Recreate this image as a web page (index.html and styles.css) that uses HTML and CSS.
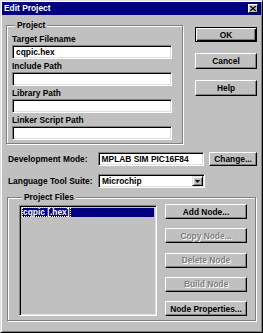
FILE: index.html
```html
<!DOCTYPE html>
<html lang="en">
<head>
  <meta charset="UTF-8" />
  <title>Edit Project</title>
  <link rel="stylesheet" href="styles.css">
</head>
<body>
  <div class="window">
    <div class="title-bar">
      <span class="title">Edit Project</span>
      <span class="close-btn">
        <svg width="6" height="5" viewBox="0 0 6 5"><path d="M0 0L6 5M6 0L0 5" stroke="#000" stroke-width="1.3"/></svg>
      </span>
    </div>

    <div class="content">
      <div class="top-section">
        <fieldset class="group project-group">
          <legend>Project</legend>
          <div class="field">
            <label>Target Filename</label>
            <div class="text-box">cqpic.hex</div>
          </div>
          <div class="field">
            <label>Include Path</label>
            <div class="text-box"></div>
          </div>
          <div class="field">
            <label>Library Path</label>
            <div class="text-box"></div>
          </div>
          <div class="field">
            <label>Linker Script Path</label>
            <div class="text-box"></div>
          </div>
        </fieldset>

        <div class="side-buttons">
          <button class="btn btn-default">OK</button>
          <button class="btn">Cancel</button>
          <button class="btn">Help</button>
        </div>
      </div>

      <div class="form-row dev-row">
        <span class="row-label">Development Mode:</span>
        <div class="text-box row-box">MPLAB SIM PIC16F84</div>
        <button class="btn change-btn">Change...</button>
      </div>

      <div class="form-row lang-row">
        <span class="row-label">Language Tool Suite:</span>
        <div class="text-box row-box combo">
          <span>Microchip</span>
          <span class="combo-arrow">
            <svg width="5" height="3" viewBox="0 0 5 3"><path d="M0 0H5L2.5 3Z" fill="#000"/></svg>
          </span>
        </div>
      </div>

      <fieldset class="group files-group">
        <legend>Project Files</legend>
        <div class="files-body">
          <div class="list-box">
            <div class="list-item selected"><span>cqpic [.hex]</span></div>
          </div>
          <div class="node-buttons">
            <button class="btn">Add Node...</button>
            <button class="btn" disabled>Copy Node...</button>
            <button class="btn" disabled>Delete Node</button>
            <button class="btn" disabled>Build Node</button>
            <button class="btn">Node Properties...</button>
          </div>
        </div>
      </fieldset>
    </div>
  </div>
</body>
</html>
```

FILE: styles.css
```css
body {
  margin: 0;
  padding: 0;
  background: #c0c0c0;
  font-family: "Liberation Sans", Arial, sans-serif;
  font-size: 8.4px;
  font-weight: bold;
  color: #000;
}

.window {
  width: 263px;
  height: 333px;
  box-sizing: border-box;
  padding: 1px;
  border: 1px solid;
  border-color: #dfdfdf #000 #000 #dfdfdf;
  box-shadow: inset 1px 1px #fff, inset -1px -1px #808080;
  background: #c0c0c0;
}

.title-bar {
  height: 13px;
  background: #000080;
  color: #fff;
  display: flex;
  align-items: center;
  justify-content: space-between;
  padding: 0 3px 0 2px;
}

.title {
  line-height: 13px;
}

.close-btn {
  width: 10px;
  height: 9px;
  box-sizing: border-box;
  background: #c0c0c0;
  border: 1px solid;
  border-color: #fff #000 #000 #fff;
  display: flex;
  align-items: center;
  justify-content: center;
}

.content {
  padding: 0 4px;
}

.top-section {
  display: flex;
  align-items: flex-start;
}

/* group boxes */
.group {
  margin: 0;
  border: 1px solid #808080;
  box-shadow: inset 1px 1px #fff, 1px 1px #fff;
  min-inline-size: 0;
}

.group legend {
  padding: 0 2px;
  margin-left: 3px;
  line-height: 10px;
  background: #c0c0c0;
}

.project-group {
  margin-top: 5px;
  width: 177px;
  box-sizing: border-box;
  padding: 4px 10px 3px 5px;
}

.field {
  margin-bottom: 2px;
}

.field:last-child {
  margin-bottom: 0;
}

.field label {
  display: block;
  line-height: 10px;
  margin-bottom: 1px;
}

.text-box {
  width: 160px;
  height: 14px;
  box-sizing: border-box;
  background: #fff;
  border: 1px solid;
  border-color: #808080 #fff #fff #808080;
  box-shadow: inset 1px 1px #000, inset -1px -1px #dfdfdf;
  padding: 0 3px;
  line-height: 12px;
  white-space: nowrap;
  overflow: hidden;
}

/* buttons */
.btn {
  font-family: inherit;
  font-size: inherit;
  font-weight: bold;
  color: #000;
  background: #c0c0c0;
  height: 15px;
  padding: 0;
  box-sizing: border-box;
  border: 1px solid;
  border-color: #fff #000 #000 #fff;
  box-shadow: inset -1px -1px #808080;
  line-height: 12px;
}

.btn:disabled {
  color: #808080;
  text-shadow: 1px 1px #fff;
}

.btn-default {
  border-color: #000;
  box-shadow: inset 1px 1px #fff, inset -1px -1px #000, inset -2px -2px #808080;
}

.side-buttons {
  margin-left: auto;
  margin-top: 12px;
  width: 62px;
  display: flex;
  flex-direction: column;
  gap: 11px;
}

.side-buttons .btn {
  width: 62px;
  height: 15px;
}

.side-buttons .btn + .btn {
  height: 16px;
}

/* single line rows */
.form-row {
  display: flex;
  align-items: center;
}

.dev-row {
  margin-top: 8px;
}

.lang-row {
  margin-top: 8px;
}

.row-label {
  width: 90px;
  padding-left: 2px;
}

.row-box {
  width: 107px;
}

.change-btn {
  width: 48px;
  height: 14px;
  margin-left: 5px;
}

.combo {
  height: 14px;
  display: flex;
  align-items: center;
  justify-content: space-between;
  padding: 0 1px 0 3px;
}

.combo-arrow {
  width: 11px;
  height: 10px;
  box-sizing: border-box;
  background: #c0c0c0;
  border: 1px solid;
  border-color: #dfdfdf #000 #000 #dfdfdf;
  box-shadow: inset 1px 1px #fff, inset -1px -1px #808080;
  display: flex;
  align-items: center;
  justify-content: center;
}

/* project files */
.files-group {
  margin-top: 4px;
  margin-left: 1px;
  width: 249px;
  box-sizing: border-box;
  padding: 3px 8px 4px 11px;
}

.files-body {
  display: flex;
  gap: 8px;
}

.list-box {
  width: 140px;
  height: 111px;
  box-sizing: border-box;
  border: 1px solid;
  border-color: #808080 #fff #fff #808080;
  box-shadow: inset 1px 1px #000, inset -1px -1px #dfdfdf;
  padding: 2px;
}

.list-item {
  height: 9px;
  line-height: 9px;
}

.list-item.selected {
  background: #000080;
  color: #fff;
}

.list-item.selected span {
  outline: 1px dotted #fff;
  outline-offset: -1px;
  padding: 0 1px;
}

.node-buttons {
  margin-top: -1px;
  height: 112px;
  display: flex;
  flex-direction: column;
  justify-content: space-between;
}

.node-buttons .btn {
  width: 82px;
}
```
